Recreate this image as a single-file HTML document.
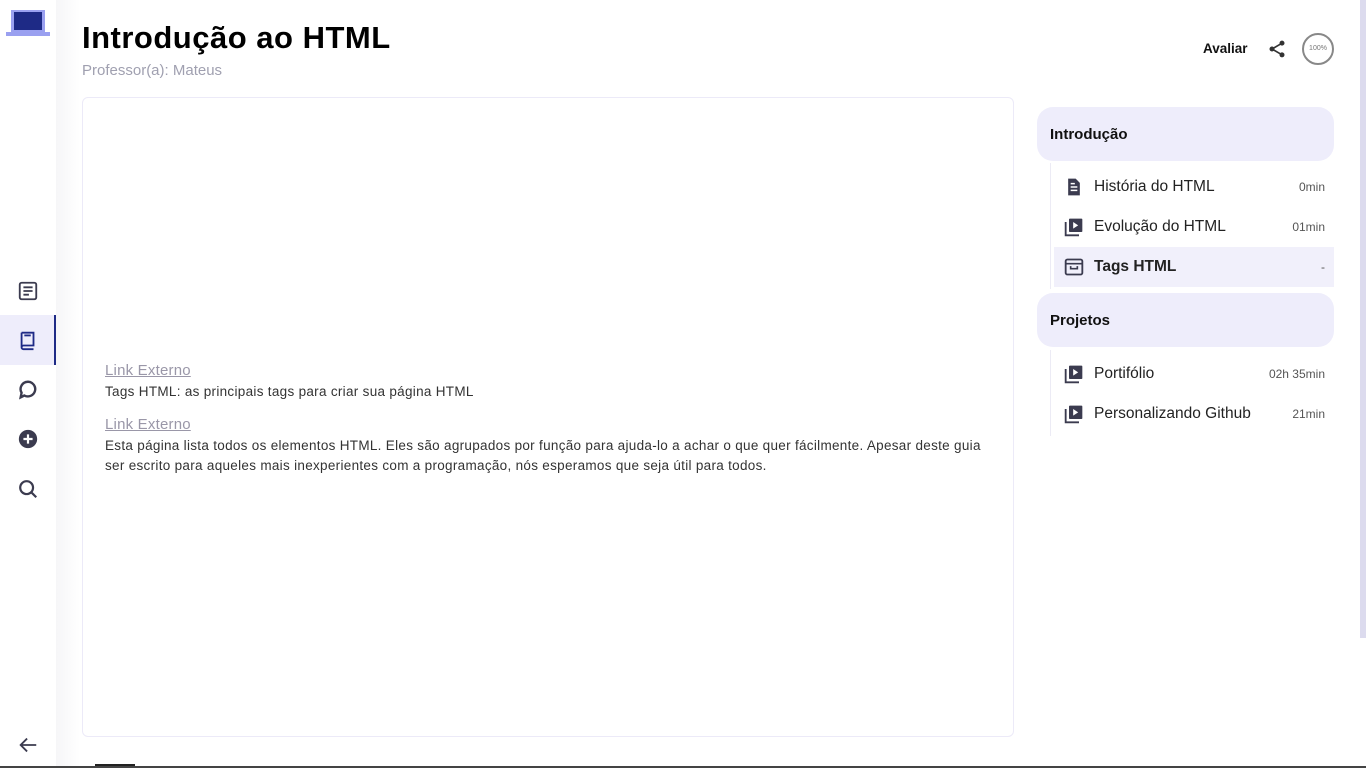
<!DOCTYPE html>
<html><head><meta charset="utf-8"><style>
*{margin:0;padding:0;box-sizing:border-box}
body{width:1366px;height:768px;overflow:hidden;background:#fff;font-family:"Liberation Sans","DejaVu Sans",sans-serif;position:relative;color:#222}
.side{position:absolute;left:0;top:0;width:56px;height:768px;background:#fff;box-shadow:4px 0 14px rgba(0,0,0,0.04)}
.shadow{position:absolute;left:56px;top:0;width:24px;height:768px;background:linear-gradient(90deg,#f6f6f8,#fff)}
.ico{position:absolute;left:16px}
h1{position:absolute;left:82px;top:20px;font-size:31px;font-weight:bold;color:#000;letter-spacing:0.5px}
.prof{position:absolute;left:82px;top:62px;font-size:15px;color:#a0a0b0}
.card{position:absolute;left:82px;top:97px;width:932px;height:640px;border:1px solid #eceaf8;border-radius:6px;background:#fff}
.link{position:absolute;left:105px;font-size:15px;color:#9a97a8;text-decoration:underline;letter-spacing:0.2px}
.txt{position:absolute;left:105px;font-size:13.5px;color:#333;line-height:20px;width:886px;letter-spacing:0.3px}
.sec{position:absolute;left:1037px;width:297px;height:54px;background:#eeedfb;border-radius:16px;font-weight:bold;font-size:15px;padding:19px 13px;color:#111}
.vline{position:absolute;left:1050px;width:1px;background:#ecebf5}
.item{position:absolute;left:1054px;width:280px;height:40px;font-size:15.5px;color:#222}
.item svg{position:absolute;left:10px;top:10px}
.item .t{position:absolute;left:40px;top:11px}
.item .d{position:absolute;right:9px;top:13px;font-size:12px;color:#555}
</style></head><body>
<div class="side"></div><div class="shadow"></div>
<svg class="ico" style="left:6px;top:10px" width="44" height="28"><rect x="5" y="0" width="34" height="22" fill="#9aa0f0"/><rect x="8" y="2" width="28" height="18" fill="#1e2a86"/><rect x="0" y="22" width="44" height="4" fill="#9aa0f0"/></svg>
<svg class="ico" style="left:17px;top:280px" width="22" height="22" viewBox="0 0 24 24"><rect x="3" y="3" width="18" height="18" rx="2" fill="none" stroke="#3b3b4f" stroke-width="2"/><path d="M7 8h10M7 12h10M7 16h6" stroke="#3b3b4f" stroke-width="2"/></svg>
<div style="position:absolute;left:0;top:315px;width:56px;height:50px;background:#eeedfb;border-right:2px solid #1e2a86"></div>
<svg class="ico" style="left:17px;top:329px" width="22" height="22" viewBox="0 0 24 24"><path d="M5 4h13v14H7a2 2 0 0 0 0 4h11M5 4v16" fill="none" stroke="#1e2a86" stroke-width="2"/><path d="M8 7h7" stroke="#1e2a86" stroke-width="2"/></svg>
<svg class="ico" style="left:17px;top:379px" width="22" height="22" viewBox="0 0 24 24"><path d="M12 3a8 8 0 1 1-4 15l-4 2 1-5A8 8 0 0 1 12 3z" fill="none" stroke="#3b3b4f" stroke-width="2.6"/></svg>
<svg class="ico" style="left:17px;top:428px" width="22" height="22" viewBox="0 0 24 24"><circle cx="12" cy="12" r="10" fill="#3b3b4f"/><path d="M12 7v10M7 12h10" stroke="#fff" stroke-width="2.4"/></svg>
<svg class="ico" style="left:17px;top:478px" width="22" height="22" viewBox="0 0 24 24"><circle cx="10.5" cy="10.5" r="7" fill="none" stroke="#3b3b4f" stroke-width="2.4"/><path d="M16 16l5 5" stroke="#3b3b4f" stroke-width="2.4"/></svg>
<svg class="ico" style="left:17px;top:734px" width="22" height="22" viewBox="0 0 24 24"><path d="M21 12H4M11 5l-7 7 7 7" fill="none" stroke="#3b3b4f" stroke-width="2"/></svg>

<h1>Introdução ao HTML</h1>
<div class="prof">Professor(a): Mateus</div>

<div style="position:absolute;left:1203px;top:41px;font-size:13.5px;font-weight:bold;color:#111">Avaliar</div>
<svg style="position:absolute;left:1267px;top:39px" width="20" height="20" viewBox="0 0 24 24"><circle cx="18" cy="5" r="3" fill="#333"/><circle cx="6" cy="12" r="3" fill="#333"/><circle cx="18" cy="19" r="3" fill="#333"/><path d="M18 5L6 12l12 7" fill="none" stroke="#333" stroke-width="2"/></svg>
<div style="position:absolute;left:1302px;top:33px;width:32px;height:32px;border:2px solid #888;border-radius:50%;font-size:7px;color:#777;text-align:center;line-height:28px">100%</div>

<div class="card"></div>
<div class="link" style="top:362px">Link Externo</div>
<div class="txt" style="top:382px">Tags HTML: as principais tags para criar sua página HTML</div>
<div class="link" style="top:416px">Link Externo</div>
<div class="txt" style="top:436px">Esta página lista todos os elementos HTML. Eles são agrupados por função para ajuda-lo a achar o que quer fácilmente. Apesar deste guia ser escrito para aqueles mais inexperientes com a programação, nós esperamos que seja útil para todos.</div>

<div class="sec" style="top:107px">Introdução</div>
<div class="vline" style="top:163px;height:126px"></div>
<div class="item" style="top:167px"><svg width="20" height="20" viewBox="0 0 24 24"><path d="M5 2h9l5 5v15H5z" fill="#3b3b4f"/><path d="M8 12h8M8 16h8M8 8h5" stroke="#fff" stroke-width="1.8"/></svg><span class="t">História do HTML</span><span class="d">0min</span></div>
<div class="item" style="top:207px"><svg width="20" height="20" viewBox="0 0 24 24"><path d="M2 6v16h16" fill="none" stroke="#3b3b4f" stroke-width="2.2"/><rect x="6" y="2" width="16" height="16" rx="1" fill="#3b3b4f"/><path d="M11 6v8l6-4z" fill="#fff"/></svg><span class="t">Evolução do HTML</span><span class="d">01min</span></div>
<div class="item" style="top:247px;background:#f1f0fb"><svg width="20" height="20" viewBox="0 0 24 24"><rect x="2" y="3" width="20" height="18" rx="2" fill="none" stroke="#3b3b4f" stroke-width="2.2"/><path d="M2 8h20M8 11v3h8v-3" fill="none" stroke="#3b3b4f" stroke-width="2"/></svg><span class="t" style="font-weight:bold">Tags HTML</span><span class="d">-</span></div>

<div class="sec" style="top:293px">Projetos</div>
<div class="vline" style="top:350px;height:86px"></div>
<div class="item" style="top:354px"><svg width="20" height="20" viewBox="0 0 24 24"><path d="M2 6v16h16" fill="none" stroke="#3b3b4f" stroke-width="2.2"/><rect x="6" y="2" width="16" height="16" rx="1" fill="#3b3b4f"/><path d="M11 6v8l6-4z" fill="#fff"/></svg><span class="t">Portifólio</span><span class="d">02h 35min</span></div>
<div class="item" style="top:394px"><svg width="20" height="20" viewBox="0 0 24 24"><path d="M2 6v16h16" fill="none" stroke="#3b3b4f" stroke-width="2.2"/><rect x="6" y="2" width="16" height="16" rx="1" fill="#3b3b4f"/><path d="M11 6v8l6-4z" fill="#fff"/></svg><span class="t">Personalizando Github</span><span class="d">21min</span></div>

<div style="position:absolute;left:1360px;top:0;width:6px;height:638px;background:#dcdbee"></div>
<div style="position:absolute;left:95px;top:764px;width:40px;height:2px;background:#222"></div>
<div style="position:absolute;left:0;top:766px;width:1366px;height:2px;background:#444"></div>
</body></html>
